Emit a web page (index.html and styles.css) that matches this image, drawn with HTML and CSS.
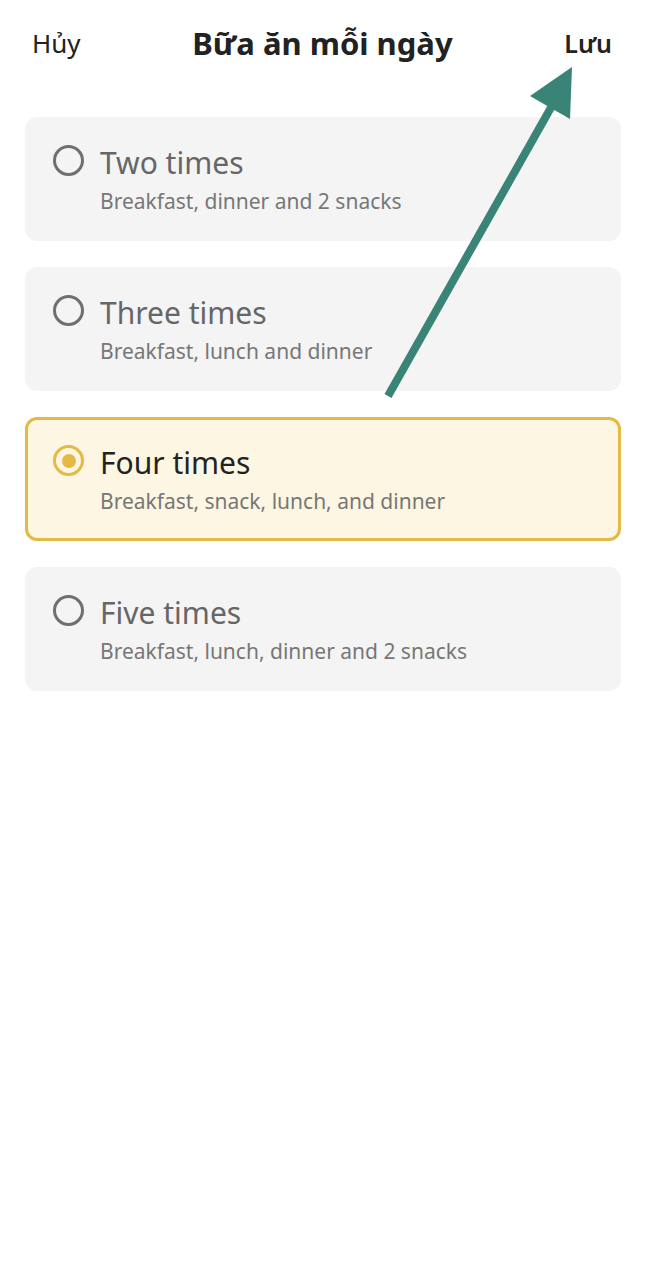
FILE: index.html
```html
<!DOCTYPE html>
<html lang="vi">
<head>
<meta charset="utf-8">
<link rel="stylesheet" href="styles.css">
</head>
<body>
<div class="screen">
  <header class="topbar">
    <span class="cancel">Hủy</span>
    <h1 class="title">Bữa ăn mỗi ngày</h1>
    <span class="save">Lưu</span>
  </header>
  <ul class="options">
    <li class="option">
      <span class="radio"></span>
      <div class="text">
        <div class="name">Two times</div>
        <div class="desc">Breakfast, dinner and 2 snacks</div>
      </div>
    </li>
    <li class="option">
      <span class="radio"></span>
      <div class="text">
        <div class="name">Three times</div>
        <div class="desc">Breakfast, lunch and dinner</div>
      </div>
    </li>
    <li class="option selected">
      <span class="radio"></span>
      <div class="text">
        <div class="name">Four times</div>
        <div class="desc">Breakfast, snack, lunch, and dinner</div>
      </div>
    </li>
    <li class="option">
      <span class="radio"></span>
      <div class="text">
        <div class="name">Five times</div>
        <div class="desc">Breakfast, lunch, dinner and 2 snacks</div>
      </div>
    </li>
  </ul>
  <svg class="arrow" width="646" height="420" viewBox="0 0 646 420">
    <line x1="388" y1="396" x2="553" y2="104" stroke="#3a8477" stroke-width="8"/>
    <polygon points="572,67 570,119 530,96" fill="#3a8477"/>
  </svg>
</div>
</body>
</html>
```
FILE: styles.css
```css
* { box-sizing: border-box; }
html, body { margin: 0; padding: 0; background: #fff; }
body { font-family: "Noto Sans", "Open Sans", sans-serif; }
.screen { position: relative; width: 646px; height: 1280px; }
.topbar {
  display: flex;
  align-items: flex-start;
  justify-content: space-between;
  padding: 20px 34px 0 32px;
  height: 90px;
}
.cancel { font-size: 26px; color: #222; line-height: 46px; }
.title { margin: 0; font-size: 31px; font-weight: 700; color: #222; line-height: 46px; }
.save { font-size: 25px; font-weight: 600; color: #222; line-height: 46px; }
.options {
  list-style: none;
  margin: 27px 25px 0 25px;
  padding: 0;
  display: flex;
  flex-direction: column;
  gap: 26px;
}
.option {
  display: flex;
  align-items: flex-start;
  gap: 16px;
  height: 124px;
  background: #f4f4f4;
  border-radius: 12px;
  padding: 25px 20px 0 25px;
  border: 3px solid transparent;
}
.radio {
  flex: none;
  width: 31px;
  height: 31px;
  border-radius: 50%;
  border: 3px solid #6f6f6f;
  position: relative;
}
.selected { background: #fdf6e2; border-color: #e4b944; }
.selected .radio { border-color: #e4b944; }
.selected .radio::after {
  content: "";
  position: absolute;
  left: 5.5px; top: 5.5px;
  width: 14px; height: 14px;
  border-radius: 50%;
  background: #e4b944;
}
.name { font-size: 30px; color: #666; line-height: 36px; margin-top: 0; }
.selected .name { color: #222; }
.desc { font-size: 21px; color: #777; line-height: 28px; margin-top: 6px; }
.arrow { position: absolute; left: 0; top: 0; pointer-events: none; }
```
